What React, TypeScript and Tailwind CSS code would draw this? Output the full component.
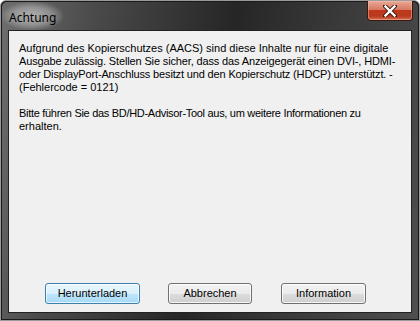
import React from "react";

export default function App() {
  const body = "font-['Liberation_Sans',Arial,sans-serif] text-[11px] leading-[13px] text-black";
  return (
    <div className="w-[420px] h-[321px] bg-white">
      <div className="relative w-[420px] h-[321px] rounded-t-[6px] border border-[#9a9a9a] bg-[#1a1a1a] p-px">
        <div className="flex flex-col h-full rounded-t-[5px] bg-[linear-gradient(100deg,#6e6e6e_0%,#4a4a4a_20%,#262626_50%,#383838_70%,#4e4e4e_100%)]">
          {/* title bar */}
          <div className="relative h-[28px] flex items-center shrink-0">
            <div className="px-[7px] py-[2px] rounded-[10px] bg-[radial-gradient(ellipse_at_center,rgba(255,255,255,0.5)_0%,rgba(255,255,255,0.3)_45%,rgba(255,255,255,0)_75%)]">
              <span className="font-['Noto_Sans',sans-serif] text-[12px] text-black">Achtung</span>
            </div>
            {/* close button */}
            <div className="absolute right-[5px] top-[-1px] w-[46px] h-[20px] rounded-b-[4px] border border-[#3a1810] border-t-0 bg-[linear-gradient(to_bottom,#e9a897_0%,#d77a63_45%,#c0371b_50%,#b83a20_80%,#d6704f_100%)] flex items-center justify-center shadow-[inset_0_0_0_1px_rgba(255,200,180,0.45)]">
              <svg width="14" height="12" viewBox="0 0 14 12">
                <path d="M2 1 L12 11 M12 1 L2 11" stroke="#3b1a12" strokeWidth="4.2" strokeLinecap="square" />
                <path d="M2.5 1.5 L11.5 10.5 M11.5 1.5 L2.5 10.5" stroke="#ffffff" strokeWidth="2.4" strokeLinecap="square" />
              </svg>
            </div>
          </div>
          {/* client */}
          <div className="flex-1 mx-[6px] mb-[6px] border border-[#222222] bg-[#f0f0f0] flex flex-col">
            <div className={`${body} pl-[10px] pt-[11px] whitespace-nowrap`}>
              <p>
                <span className="block">Aufgrund des Kopierschutzes (AACS) sind diese Inhalte nur für eine digitale</span>
                <span className="block tracking-[-0.14px]">Ausgabe zulässig. Stellen Sie sicher, dass das Anzeigegerät einen DVI-, HDMI-</span>
                <span className="block tracking-[-0.15px]">oder DisplayPort-Anschluss besitzt und den Kopierschutz (HDCP) unterstützt. -</span>
                <span className="block">(Fehlercode = 0121)</span>
              </p>
              <p className="mt-[13px]">
                <span className="block tracking-[-0.3px]">Bitte führen Sie das BD/HD-Advisor-Tool aus, um weitere Informationen zu</span>
                <span className="block">erhalten.</span>
              </p>
            </div>
            <div className="flex-1" />
            <div className="flex pl-[36px] mb-[8px]">
              <div className={`${body} w-[95px] h-[21px] rounded-[3px] border border-[#3c7fb1] bg-[linear-gradient(to_bottom,#eaf6fd_0%,#d9f0fc_50%,#bee6fd_51%,#a7d9f5_100%)] shadow-[inset_0_0_0_1px_rgba(255,255,255,0.7)] flex items-center justify-center`}>Herunterladen</div>
              <div className={`${body} ml-[28px] w-[84px] h-[21px] rounded-[3px] border border-[#707070] bg-[linear-gradient(to_bottom,#f2f2f2_0%,#ebebeb_50%,#dddddd_51%,#cfcfcf_100%)] shadow-[inset_0_0_0_1px_rgba(255,255,255,0.8)] flex items-center justify-center`}>Abbrechen</div>
              <div className={`${body} ml-[29px] w-[85px] h-[21px] rounded-[3px] border border-[#707070] bg-[linear-gradient(to_bottom,#f2f2f2_0%,#ebebeb_50%,#dddddd_51%,#cfcfcf_100%)] shadow-[inset_0_0_0_1px_rgba(255,255,255,0.8)] flex items-center justify-center`}>Information</div>
            </div>
          </div>
        </div>
      </div>
    </div>
  );
}
